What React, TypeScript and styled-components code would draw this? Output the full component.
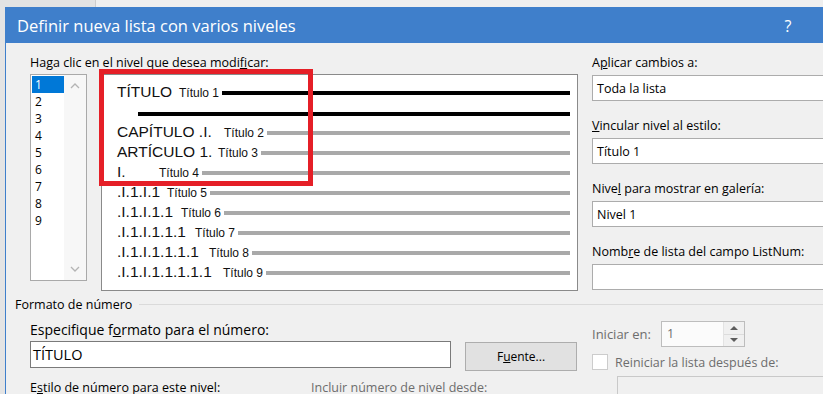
import styled, { createGlobalStyle } from 'styled-components';

const UI_FONT = "'Open Sans', 'Noto Sans', sans-serif";
const PREVIEW_FONT = "'Liberation Sans', Arial, sans-serif";
const ACCENT = '#3f7fcb';
const DISABLED = '#6d6d6d';

const GlobalStyle = createGlobalStyle`
  html, body {
    margin: 0;
    padding: 0;
  }
  body {
    background: #e4e4e4;
    font-family: ${UI_FONT};
    overflow: hidden;
  }
`;

const Screen = styled.div`
  position: relative;
  width: 823px;
  height: 394px;
  overflow: hidden;
  background: #e4e4e4;
`;

const Backdrop = styled.div`
  display: flex;
  height: 7px;
`;

const BackPane = styled.div<{ $width?: number; $bg: string }>`
  flex: ${(p) => (p.$width ? `0 0 ${p.$width}px` : '1')};
  background: ${(p) => p.$bg};
`;

const Dialog = styled.div`
  box-sizing: border-box;
  margin-left: 5px;
  width: 852px;
  height: 387px;
  border-left: 1px solid ${ACCENT};
  background: #f0f0f0;
  display: flex;
  flex-direction: column;
`;

const TitleBar = styled.div`
  flex: 0 0 36px;
  display: flex;
  align-items: center;
  padding: 1px 46px 0 11px;
  box-sizing: border-box;
  background: ${ACCENT};
  color: #fff;
  font-size: 16.5px;
`;

const Title = styled.div`
  flex: 1;
  white-space: nowrap;
`;

const HelpButton = styled.div`
  width: 46px;
  text-align: center;
  font-size: 16px;
`;

const Body = styled.div`
  padding: 11px 0 0 24px;
  font-size: 12.5px;
  color: #000;
`;

const Section = styled.div`
  display: flex;
  align-items: flex-start;
`;

const LeftArea = styled.div`
  width: 548px;
  margin-right: 14px;
`;

const RightArea = styled.div<{ $gap?: number }>`
  width: 253px;
  display: flex;
  flex-direction: column;
  gap: ${(p) => p.$gap ?? 0}px;
`;

const Label = styled.div<{ $disabled?: boolean; $size?: number }>`
  height: 17px;
  line-height: 17px;
  white-space: nowrap;
  font-size: ${(p) => (p.$size ? `${p.$size}px` : 'inherit')};
  color: ${(p) => (p.$disabled ? DISABLED : '#000')};
`;

const Key = styled.span`
  text-decoration: underline;
  text-underline-offset: 1px;
`;

const Panes = styled.div`
  display: flex;
  gap: 14px;
  margin-top: 3px;
`;

const LevelList = styled.div`
  box-sizing: border-box;
  width: 57px;
  height: 207px;
  border: 1px solid #a9a9a9;
  background: #fff;
  display: flex;
`;

const LevelItems = styled.div`
  flex: 1;
  padding: 1px 0 0 1px;
`;

const LevelItem = styled.div<{ $selected?: boolean }>`
  height: 17px;
  line-height: 17px;
  padding-left: 3px;
  font-size: 12px;
  background: ${(p) => (p.$selected ? '#0078d7' : 'transparent')};
  color: ${(p) => (p.$selected ? '#fff' : '#000')};
`;

const ScrollTrack = styled.div`
  width: 22px;
  background: #f7f7f7;
  display: flex;
  flex-direction: column;
  justify-content: space-between;
  align-items: center;
  padding: 8px 0 8px;
`;

const Preview = styled.div`
  box-sizing: border-box;
  width: 477px;
  height: 217px;
  border: 1px solid #8a8a8a;
  background: #fff;
  padding: 7px 7px 0 15px;
  font-family: ${PREVIEW_FONT};
  color: #111;
`;

const PreviewRow = styled.div`
  display: flex;
  align-items: baseline;
  height: 20px;
  white-space: nowrap;
`;

const RuleRow = styled.div`
  display: flex;
  align-items: center;
  box-sizing: border-box;
  height: 20px;
  padding: 3px 0 0 21px;
`;

const NumberText = styled.span<{ $width: number }>`
  flex: 0 0 ${(p) => p.$width}px;
  font-size: 15.5px;
  line-height: 20px;
`;

const StyleText = styled.span`
  font-size: 12px;
  line-height: 20px;
`;

const Bar = styled.div<{ $dark?: boolean; $solo?: boolean }>`
  flex: 1;
  height: 4px;
  margin-left: ${(p) => (p.$solo ? 0 : 3)}px;
  background: ${(p) => (p.$dark ? '#000' : '#a9a9a9')};
  transform: translateY(${(p) => (p.$solo ? 0 : -2)}px);
`;

const FieldBox = styled.div`
  box-sizing: border-box;
  height: 26px;
  margin-top: 4px;
  border: 1px solid #acacac;
  background: #fff;
  padding-left: 4px;
  display: flex;
  align-items: center;
  font-size: 12.5px;
`;

const GroupHeader = styled.div`
  display: flex;
  align-items: center;
  margin: 5px 0 0 -15px;
  height: 17px;
  line-height: 17px;
`;

const GroupLine = styled.div`
  flex: 1;
  height: 1px;
  margin-left: 7px;
  background: #dadada;
`;

const BottomSection = styled(Section)`
  margin-top: 8px;
`;

const InputRow = styled.div`
  display: flex;
  align-items: flex-start;
  gap: 14px;
  margin-top: 3px;
`;

const FormatInput = styled.div`
  box-sizing: border-box;
  width: 421px;
  height: 27px;
  border: 1px solid #7a7a7a;
  background: #fff;
  padding-left: 2px;
  display: flex;
  align-items: center;
  font-size: 14.5px;
`;

const Button = styled.div`
  box-sizing: border-box;
  width: 112px;
  height: 29px;
  margin-top: 1px;
  border: 1px solid #adadad;
  background: #e1e1e1;
  display: flex;
  align-items: center;
  justify-content: center;
  font-size: 12px;
`;

const LabelPair = styled.div`
  display: grid;
  grid-template-columns: 281px auto;
  margin-top: 8px;
`;

const SpinRow = styled.div`
  display: flex;
  align-items: center;
  height: 26px;
`;

const SpinLabel = styled(Label)`
  width: 69px;
`;

const Spin = styled.div`
  box-sizing: border-box;
  width: 84px;
  height: 26px;
  border: 1px solid #bdbdbd;
  background: #fbfbfb;
  display: flex;
`;

const SpinValue = styled.div`
  flex: 1;
  padding: 3px 0 0 5px;
  font-size: 12.5px;
  color: ${DISABLED};
`;

const SpinButtons = styled.div`
  width: 20px;
  display: flex;
  flex-direction: column;
  border-left: 1px solid #e3e3e3;
`;

const SpinButton = styled.div<{ $down?: boolean }>`
  flex: 1;
  display: flex;
  align-items: center;
  justify-content: center;
  background: #f0f0f0;
  border-top: ${(p) => (p.$down ? '1px solid #dcdcdc' : 'none')};
`;

const CheckRow = styled.div`
  display: flex;
  align-items: center;
  height: 20px;
  margin-top: 5px;
`;

const CheckBox = styled.div`
  box-sizing: border-box;
  width: 16px;
  height: 16px;
  border: 1px solid #cccccc;
  background: #fff;
  margin-right: 7px;
`;

const DisabledBox = styled.div`
  box-sizing: border-box;
  height: 40px;
  margin: 4px 0 0 25px;
  border: 1px solid #c9c9c9;
  background: #f0f0f0;
`;

const Annotation = styled.div`
  position: absolute;
  left: 99px;
  top: 69px;
  width: 214px;
  height: 117px;
  box-sizing: border-box;
  border: 5px solid #e51f27;
  pointer-events: none;
`;

const Chevron = ({ down }: { down?: boolean }) => (
  <svg width="10" height="6" viewBox="0 0 10 6">
    <polyline
      points={down ? '1,1 5,5 9,1' : '1,5 5,1 9,5'}
      fill="none"
      stroke="#b4b4b4"
      strokeWidth="1.3"
    />
  </svg>
);

const Triangle = ({ down }: { down?: boolean }) => (
  <svg width="8" height="4" viewBox="0 0 8 4">
    <polygon points={down ? '0,0 8,0 4,4' : '0,4 8,4 4,0'} fill="#5c5c5c" />
  </svg>
);

type Level = { num: string; style: string; width: number; dark?: boolean };

const levels: Level[] = [
  { num: 'TÍTULO', style: 'Título 1', width: 62, dark: true },
  { num: 'CAPÍTULO .I.', style: 'Título 2', width: 107 },
  { num: 'ARTÍCULO 1.', style: 'Título 3', width: 101 },
  { num: 'I.', style: 'Título 4', width: 42 },
  { num: '.I.1.I.1', style: 'Título 5', width: 50 },
  { num: '.I.1.I.1.1', style: 'Título 6', width: 64 },
  { num: '.I.1.I.1.1.1', style: 'Título 7', width: 78 },
  { num: '.I.1.I.1.1.1.1', style: 'Título 8', width: 92 },
  { num: '.I.1.I.1.1.1.1.1', style: 'Título 9', width: 106 },
];

const LevelRow = ({ level }: { level: Level }) => (
  <PreviewRow>
    <NumberText $width={level.width}>{level.num}</NumberText>
    <StyleText>{level.style}</StyleText>
    <Bar $dark={level.dark} />
  </PreviewRow>
);

const App = () => (
  <Screen>
    <GlobalStyle />
    <Backdrop>
      <BackPane $width={95} $bg="#e3e3e3" />
      <BackPane $width={1} $bg="#cdcdcd" />
      <BackPane $bg="#efefef" />
    </Backdrop>
    <Dialog>
      <TitleBar>
        <Title>Definir nueva lista con varios niveles</Title>
        <HelpButton>?</HelpButton>
      </TitleBar>
      <Body>
        <Section>
          <LeftArea>
            <Label>
              Haga clic en el nivel que desea modi<Key>f</Key>icar:
            </Label>
            <Panes>
              <LevelList>
                <LevelItems>
                  {['1', '2', '3', '4', '5', '6', '7', '8', '9'].map((n) => (
                    <LevelItem key={n} $selected={n === '1'}>
                      {n}
                    </LevelItem>
                  ))}
                </LevelItems>
                <ScrollTrack>
                  <Chevron />
                  <Chevron down />
                </ScrollTrack>
              </LevelList>
              <Preview>
                <LevelRow level={levels[0]} />
                <RuleRow>
                  <Bar $dark $solo />
                </RuleRow>
                {levels.slice(1).map((l) => (
                  <LevelRow key={l.style} level={l} />
                ))}
              </Preview>
            </Panes>
          </LeftArea>
          <RightArea $gap={16}>
            <div>
              <Label>
                A<Key>p</Key>licar cambios a:
              </Label>
              <FieldBox>Toda la lista</FieldBox>
            </div>
            <div>
              <Label>
                <Key>V</Key>incular nivel al estilo:
              </Label>
              <FieldBox>Título 1</FieldBox>
            </div>
            <div>
              <Label>
                Nive<Key>l</Key> para mostrar en galería:
              </Label>
              <FieldBox>Nivel 1</FieldBox>
            </div>
            <div>
              <Label>
                Nomb<Key>r</Key>e de lista del campo ListNum:
              </Label>
              <FieldBox />
            </div>
          </RightArea>
        </Section>

        <GroupHeader>
          Formato de número
          <GroupLine />
        </GroupHeader>

        <BottomSection>
          <LeftArea>
            <Label $size={14}>
              Especifique f<Key>o</Key>rmato para el número:
            </Label>
            <InputRow>
              <FormatInput>TÍTULO</FormatInput>
              <Button>
                F<Key>u</Key>ente...
              </Button>
            </InputRow>
            <LabelPair>
              <Label>
                E<Key>s</Key>tilo de número para este nivel:
              </Label>
              <Label $disabled>Incluir número de nivel desde:</Label>
            </LabelPair>
          </LeftArea>
          <RightArea>
            <SpinRow>
              <SpinLabel $disabled $size={13}>
                Iniciar en:
              </SpinLabel>
              <Spin>
                <SpinValue>1</SpinValue>
                <SpinButtons>
                  <SpinButton>
                    <Triangle />
                  </SpinButton>
                  <SpinButton $down>
                    <Triangle down />
                  </SpinButton>
                </SpinButtons>
              </Spin>
            </SpinRow>
            <CheckRow>
              <CheckBox />
              <Label $disabled>Reiniciar la lista después de:</Label>
            </CheckRow>
            <DisabledBox />
          </RightArea>
        </BottomSection>
      </Body>
    </Dialog>
    <Annotation />
  </Screen>
);

export default App;
